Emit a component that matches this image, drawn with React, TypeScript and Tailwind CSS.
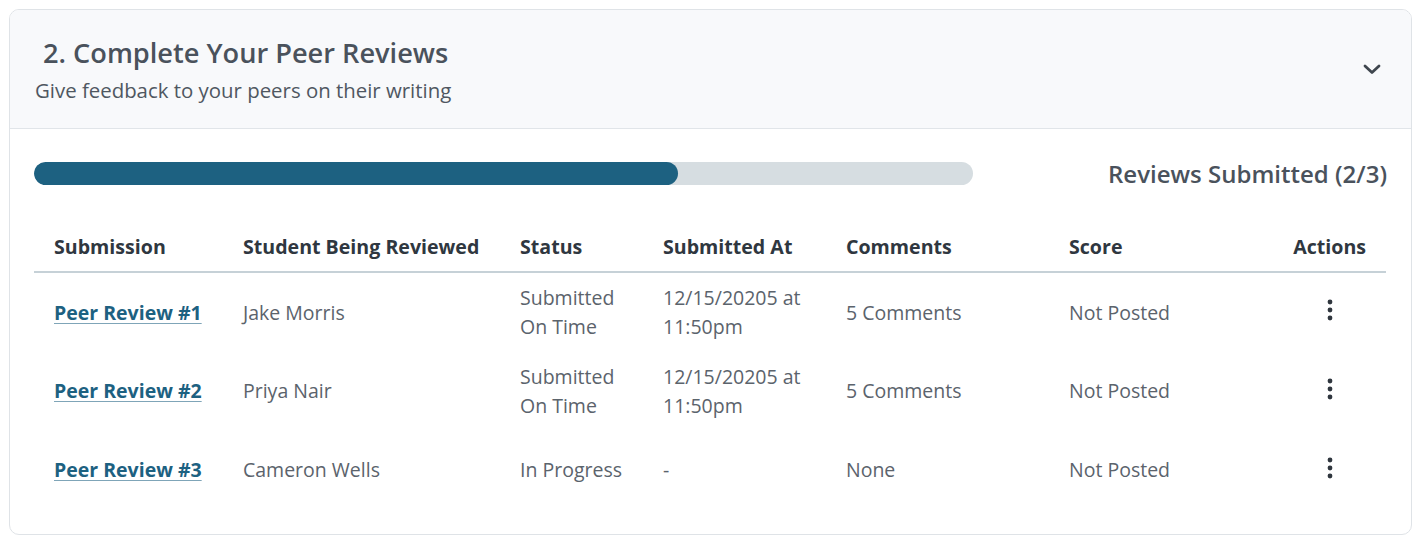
import React from "react";

const rows = [
  { name: "Peer Review #1", student: "Jake Morris", status: ["Submitted", "On Time"], at: ["12/15/20205 at", "11:50pm"], comments: "5 Comments", score: "Not Posted" },
  { name: "Peer Review #2", student: "Priya Nair", status: ["Submitted", "On Time"], at: ["12/15/20205 at", "11:50pm"], comments: "5 Comments", score: "Not Posted" },
  { name: "Peer Review #3", student: "Cameron Wells", status: ["In Progress"], at: ["-"], comments: "None", score: "Not Posted" },
];

function Dots() {
  return (
    <svg width="6" height="22" viewBox="0 0 6 22" className="inline-block">
      <circle cx="3" cy="3" r="2.4" fill="#2f363e" />
      <circle cx="3" cy="11" r="2.4" fill="#2f363e" />
      <circle cx="3" cy="19" r="2.4" fill="#2f363e" />
    </svg>
  );
}

export default function App() {
  return (
    <div className="w-[1421px] h-[547px] bg-white pt-[9px] pl-[9px]" style={{ fontFamily: '"Open Sans", sans-serif' }}>
      <div className="w-[1403px] rounded-[10px] border border-[#dfe3e7] overflow-hidden bg-white">
        <div className="flex items-center bg-[#f8f9fb] border-b border-[#e1e5e9] pl-[25px] pr-[29px] pt-[25px] pb-[24px]">
          <div className="flex-1">
            <div className="pl-[8px] text-[27.2px] leading-[36px] font-semibold text-[#4a525c]">2. Complete Your Peer Reviews</div>
            <div className="mt-[5px] text-[20.4px] leading-[28px] text-[#4f5761]">Give feedback to your peers on their writing</div>
          </div>
          <svg width="20" height="11" viewBox="0 0 20 11">
            <path d="M3 2 L10 8.5 L17 2" fill="none" stroke="#3f464e" strokeWidth="2.8" strokeLinecap="round" strokeLinejoin="round" />
          </svg>
        </div>
        <div className="px-[24px] pt-[33px] pb-[25px]">
          <div className="flex items-center h-[23px]">
            <div className="w-[939px] h-[23px] rounded-full bg-[#d6dde1] overflow-hidden">
              <div className="h-full w-[644px] rounded-full bg-[#1d6181]" />
            </div>
            <div className="ml-auto text-[24px] leading-[23px] font-semibold text-[#4a525c]">Reviews Submitted (2/3)</div>
          </div>
          <table className="mt-[34px] w-[1352px] border-collapse table-fixed">
            <colgroup>
              <col className="w-[189px]" />
              <col className="w-[277px]" />
              <col className="w-[143px]" />
              <col className="w-[183px]" />
              <col className="w-[223px]" />
              <col className="w-[180px]" />
              <col />
            </colgroup>
            <thead>
              <tr className="border-b-2 border-[#c6d1d7] text-left text-[19.6px] leading-[29px] font-bold text-[#2f3740]">
                <th className="pl-[20px] pt-[13px] pb-[10px] font-bold whitespace-nowrap">Submission</th>
                <th className="pl-[20px] pt-[13px] pb-[10px] font-bold whitespace-nowrap">Student Being Reviewed</th>
                <th className="pl-[20px] pt-[13px] pb-[10px] font-bold whitespace-nowrap">Status</th>
                <th className="pl-[20px] pt-[13px] pb-[10px] font-bold whitespace-nowrap">Submitted At</th>
                <th className="pl-[20px] pt-[13px] pb-[10px] font-bold whitespace-nowrap">Comments</th>
                <th className="pl-[20px] pt-[13px] pb-[10px] font-bold whitespace-nowrap">Score</th>
                <th className="pr-[20px] pt-[13px] pb-[10px] font-bold text-right whitespace-nowrap">Actions</th>
              </tr>
            </thead>
            <tbody className="text-[19.5px] leading-[29px] text-[#5b636c]">
              {rows.map((r) => (
                <tr key={r.name} className="h-[79px]">
                  <td className="pl-[20px] align-middle whitespace-nowrap">
                    <a href="#" className="font-bold text-[#1d6181] underline underline-offset-[3px] decoration-[1px] decoration-[#7fa5b8]">{r.name}</a>
                  </td>
                  <td className="pl-[20px] align-middle whitespace-nowrap">{r.student}</td>
                  <td className="pl-[20px] align-middle whitespace-nowrap">
                    {r.status.map((s) => (
                      <div key={s}>{s}</div>
                    ))}
                  </td>
                  <td className="pl-[20px] align-middle whitespace-nowrap">
                    {r.at.map((s) => (
                      <div key={s}>{s}</div>
                    ))}
                  </td>
                  <td className="pl-[20px] align-middle whitespace-nowrap">{r.comments}</td>
                  <td className="pl-[20px] align-middle whitespace-nowrap">{r.score}</td>
                  <td className="align-middle text-right pr-[53px]">
                    <span className="inline-flex items-center h-[29px]"><Dots /></span>
                  </td>
                </tr>
              ))}
            </tbody>
          </table>
        </div>
      </div>
    </div>
  );
}
